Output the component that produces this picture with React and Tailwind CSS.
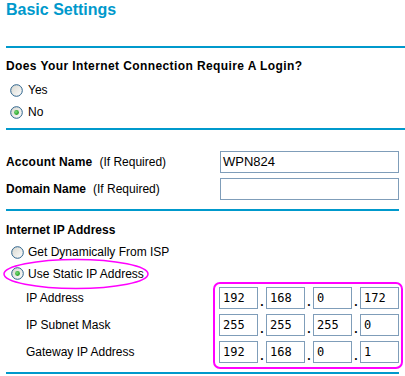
import React from 'react'

const BLUE = 'bg-[#0099cc]'

function Radio({ checked }) {
  return (
    <svg width="13" height="13" viewBox="0 0 13 13" className="shrink-0">
      <defs>
        <linearGradient id="radioFill" x1="0" y1="0" x2="1" y2="1">
          <stop offset="0" stopColor="#d6d6ce" />
          <stop offset="1" stopColor="#ffffff" />
        </linearGradient>
        <radialGradient id="radioDot" cx="0.4" cy="0.4" r="0.6">
          <stop offset="0" stopColor="#7be07b" />
          <stop offset="1" stopColor="#1f9a1f" />
        </radialGradient>
      </defs>
      <circle cx="6.5" cy="6.5" r="5.8" fill="url(#radioFill)" stroke="#2c628b" strokeWidth="1" />
      {checked && <circle cx="6.5" cy="6.5" r="2.4" fill="url(#radioDot)" />}
    </svg>
  )
}

function Field({ value, className = '' }) {
  return (
    <div className={`h-[22px] border border-[#7f9db9] bg-white flex items-center ${className}`}>
      {value}
    </div>
  )
}

function IpRow({ label, parts }) {
  return (
    <div className="flex items-center h-[22px]">
      <div className="w-[213px] pl-[20px]">{label}</div>
      {parts.map((p, i) => (
        <React.Fragment key={i}>
          {i > 0 && <div className="w-[8px] self-end pb-[2px] text-center leading-[10px] font-bold">.</div>}
          <Field
            value={p}
            className="w-[39px] pl-[3px] font-['DejaVu_Sans_Mono',monospace] text-[12px]"
          />
        </React.Fragment>
      ))}
    </div>
  )
}

export default function App() {
  return (
    <div className="relative w-[405px] h-[376px] bg-white overflow-hidden text-black text-[12px] leading-[14px] font-['Liberation_Sans',Arial,sans-serif]">
      {/* Title */}
      <div className="h-[46px] pl-[6px] pt-[1px]">
        <h1 className="text-[16px] leading-[18px] font-bold text-[#0099cc]">Basic Settings</h1>
      </div>
      <div className={`ml-[6px] h-[2px] ${BLUE}`} />

      {/* Login question */}
      <div className="h-[80px] pl-[6px] pt-[8px]">
        <div className="h-[20px] flex items-center font-bold tracking-[0.4px]">Does Your Internet Connection Require A Login?</div>
        <div className="mt-[4px] h-[20px] flex items-center gap-[5px] pl-[4px]">
          <Radio />
          <span>Yes</span>
        </div>
        <div className="mt-[2px] h-[20px] flex items-center gap-[5px] pl-[4px]">
          <Radio checked />
          <span>No</span>
        </div>
      </div>
      <div className={`ml-[6px] h-[2px] ${BLUE}`} />

      {/* Account */}
      <div className="h-[79px] pl-[6px] pt-[21px]">
        <div className="flex items-center">
          <div className="w-[214px]">
            <span className="font-bold tracking-[0.2px]">Account Name</span>
            <span className="ml-[7px]">(If Required)</span>
          </div>
          <Field value="WPN824" className="w-[179px] pl-[2px] text-[13px]" />
        </div>
        <div className="mt-[5px] flex items-center">
          <div className="w-[214px]">
            <span className="font-bold">Domain Name</span>
            <span className="ml-[7px]">(If Required)</span>
          </div>
          <Field value="" className="w-[179px]" />
        </div>
      </div>
      <div className={`ml-[6px] w-[393px] h-[2px] ${BLUE}`} />

      {/* Internet IP */}
      <div className="h-[161px] pl-[6px] pt-[9px]">
        <div className="h-[20px] flex items-center font-bold">Internet IP Address</div>
        <div className="mt-[2px] h-[20px] flex items-center gap-[4px] pl-[5px]">
          <Radio />
          <span>Get Dynamically From ISP</span>
        </div>
        <div className="mt-[1px] h-[21px] flex items-center gap-[4px] pl-[5px]">
          <Radio checked />
          <span>Use Static IP Address</span>
        </div>
        <div className="mt-[3px] flex flex-col gap-[5px]">
          <IpRow label="IP Address" parts={['192', '168', '0', '172']} />
          <IpRow label="IP Subnet Mask" parts={['255', '255', '255', '0']} />
          <IpRow label="Gateway IP Address" parts={['192', '168', '0', '1']} />
        </div>
      </div>
      <div className={`ml-[6px] w-[393px] h-[2px] ${BLUE}`} />

      {/* magenta annotations */}
      <svg className="absolute left-[2px] top-[258px] pointer-events-none" width="148" height="32">
        <ellipse cx="74" cy="16" rx="72" ry="14.5" fill="none" stroke="#ff00ff" strokeWidth="1.5" />
      </svg>
      <div className="absolute left-[213px] top-[282px] w-[190px] h-[87px] border-2 border-[#ff00ff] rounded-[7px] pointer-events-none" />
    </div>
  )
}
